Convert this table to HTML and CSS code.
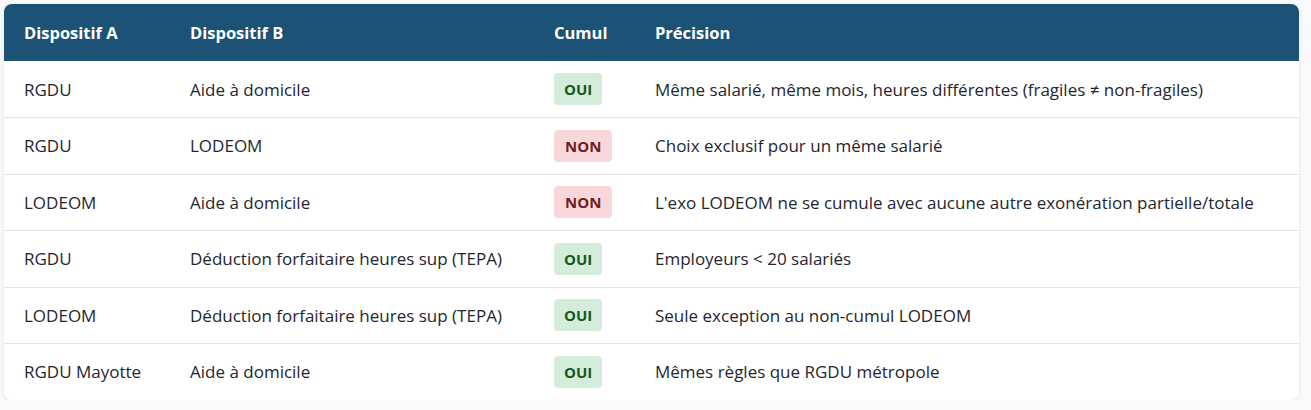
FILE: index.html
```html
<!DOCTYPE html>
<html lang="fr">
<head>
<meta charset="utf-8">
<link rel="stylesheet" href="styles.css">
</head>
<body>
<div class="card">
  <table class="compat">
    <colgroup>
      <col class="c-a"><col class="c-b"><col class="c-cumul"><col class="c-prec">
    </colgroup>
    <thead>
      <tr><th>Dispositif A</th><th>Dispositif B</th><th>Cumul</th><th>Précision</th></tr>
    </thead>
    <tbody>
      <tr><td>RGDU</td><td>Aide à domicile</td><td><span class="badge yes">OUI</span></td><td>Même salarié, même mois, heures différentes (fragiles ≠ non-fragiles)</td></tr>
      <tr><td>RGDU</td><td>LODEOM</td><td><span class="badge no">NON</span></td><td>Choix exclusif pour un même salarié</td></tr>
      <tr><td>LODEOM</td><td>Aide à domicile</td><td><span class="badge no">NON</span></td><td>L'exo LODEOM ne se cumule avec aucune autre exonération partielle/totale</td></tr>
      <tr><td>RGDU</td><td>Déduction forfaitaire heures sup (TEPA)</td><td><span class="badge yes">OUI</span></td><td>Employeurs &lt; 20 salariés</td></tr>
      <tr><td>LODEOM</td><td>Déduction forfaitaire heures sup (TEPA)</td><td><span class="badge yes">OUI</span></td><td>Seule exception au non-cumul LODEOM</td></tr>
      <tr><td>RGDU Mayotte</td><td>Aide à domicile</td><td><span class="badge yes">OUI</span></td><td>Mêmes règles que RGDU métropole</td></tr>
    </tbody>
  </table>
</div>
</body>
</html>
```
FILE: styles.css
```css
html, body { margin: 0; padding: 0; }
body {
  background: #f8f9fb;
  font-family: "Segoe UI", "Open Sans", "Noto Sans", sans-serif;
  color: #1f2630;
  padding: 4px 12px 0 4px;
}
.card {
  background: #fff;
  border-radius: 8px;
  overflow: hidden;
  box-shadow: 0 1px 4px rgba(0,0,0,0.08);
  width: 1295px;
}
.compat {
  width: 100%;
  border-collapse: collapse;
  table-layout: fixed;
  font-size: 17px;
}
.c-a { width: 166px; }
.c-b { width: 364px; }
.c-cumul { width: 101px; }
thead tr { background: #1b5276; }
th {
  color: #fff;
  font-weight: 700;
  font-size: 16.5px;
  text-align: left;
  padding: 0 20px;
  height: 57px;
}
td {
  padding: 0 20px;
  height: 55.5px;
  border-top: 1px solid #e2e4e8;
  white-space: nowrap;
}
tbody tr:first-child td { border-top: none; height: 56px; }
.badge {
  display: inline-block;
  padding: 6px 10px;
  border-radius: 4px;
  font-weight: 700;
  font-size: 15px;
  line-height: 20px;
}
.no { padding: 6px 11px; }
.yes { background: #d4edda; color: #155724; }
.no { background: #f8d7da; color: #721c24; }
```
